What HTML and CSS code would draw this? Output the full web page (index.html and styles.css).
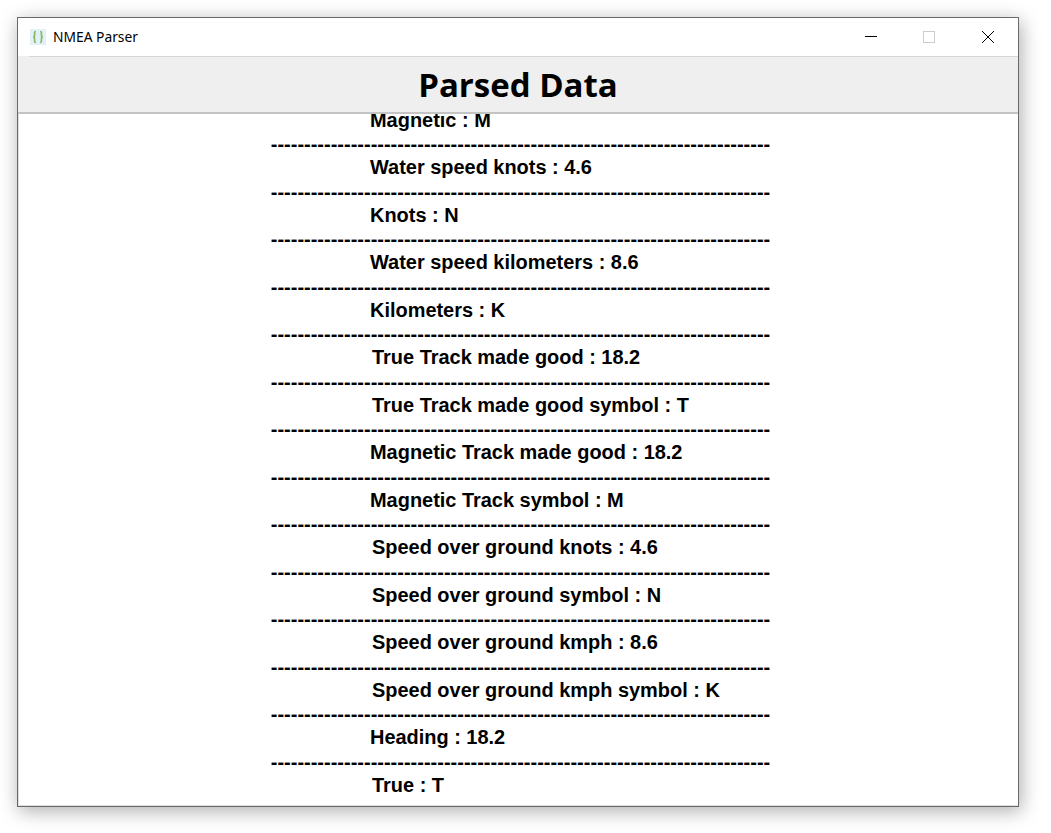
FILE: index.html
```html
<!DOCTYPE html>
<html lang="en">
<head>
<meta charset="utf-8">
<title>NMEA Parser</title>
<link rel="stylesheet" href="styles.css">
</head>
<body>
<div class="window">
  <div class="titlebar">
    <svg class="app-icon" width="16" height="16" viewBox="0 0 16 16">
      <rect width="16" height="16" fill="#e3f1f7"/>
      <path d="M6 2.5C4.2 2.5 4.6 4 4.6 6C4.6 7.2 4.2 8 3 8C4.2 8 4.6 8.800 4.6 10C4.6 12 4.200 13.500 6 13.500M10 2.500C11.800 2.500 11.400 4 11.400 6C11.400 7.200 11.800 8 13 8C11.800 8 11.400 8.800 11.400 10C11.400 12 11.800 13.500 10 13.500" fill="none" stroke="#86bd6a" stroke-width="1.700"/>
    </svg>
    <span class="app-name">NMEA Parser</span>
    <div class="controls">
      <svg class="ctl" width="58" height="38" viewBox="0 0 58 38"><path d="M23 18.500H35" stroke="#000" fill="none"/></svg>
      <svg class="ctl" width="58" height="38" viewBox="0 0 58 38"><rect x="23.500" y="13.500" width="11" height="11" stroke="#ccc" fill="none"/></svg>
      <svg class="ctl" width="58" height="38" viewBox="0 0 58 38"><path d="M24 13L36 25M36 13L24 25" stroke="#000" fill="none"/></svg>
    </div>
  </div>
  <div class="heading-wrap"><h1 class="heading">Parsed Data</h1></div>
  <div class="content">
    <ul class="rows">
      <li class="row">Magnetic : M</li>
      <li class="sep">---------------------------------------------------------------------------</li>
      <li class="row">Water speed knots : 4.6</li>
      <li class="sep">---------------------------------------------------------------------------</li>
      <li class="row">Knots : N</li>
      <li class="sep">---------------------------------------------------------------------------</li>
      <li class="row">Water speed kilometers : 8.6</li>
      <li class="sep">---------------------------------------------------------------------------</li>
      <li class="row">Kilometers : K</li>
      <li class="sep">---------------------------------------------------------------------------</li>
      <li class="row alt">True Track made good : 18.2</li>
      <li class="sep">---------------------------------------------------------------------------</li>
      <li class="row alt">True Track made good symbol : T</li>
      <li class="sep">---------------------------------------------------------------------------</li>
      <li class="row">Magnetic Track made good : 18.2</li>
      <li class="sep">---------------------------------------------------------------------------</li>
      <li class="row">Magnetic Track symbol : M</li>
      <li class="sep">---------------------------------------------------------------------------</li>
      <li class="row alt">Speed over ground knots : 4.6</li>
      <li class="sep">---------------------------------------------------------------------------</li>
      <li class="row alt">Speed over ground symbol : N</li>
      <li class="sep">---------------------------------------------------------------------------</li>
      <li class="row alt">Speed over ground kmph : 8.6</li>
      <li class="sep">---------------------------------------------------------------------------</li>
      <li class="row alt">Speed over ground kmph symbol : K</li>
      <li class="sep">---------------------------------------------------------------------------</li>
      <li class="row">Heading : 18.2</li>
      <li class="sep">---------------------------------------------------------------------------</li>
      <li class="row alt">True : T</li>
    </ul>
  </div>
</div>
</body>
</html>
```
FILE: styles.css
```css
* { box-sizing: border-box; }
html, body { margin: 0; padding: 0; background: #fff; }
body { width: 1051px; height: 833px; overflow: hidden; padding: 17px 0 0 17px; }
.window {
  width: 1002px;
  height: 790px;
  background: #fff;
  border: 1px solid #6a6a6a;
  box-shadow: 2px 4px 18px rgba(0,0,0,.33);
  display: flex;
  flex-direction: column;
  overflow: hidden;
}
.titlebar {
  height: 38px;
  flex: none;
  display: flex;
  align-items: center;
  padding-left: 12px;
}
.app-icon { flex: none; margin-right: 7px; }
.app-name { font: 13.800px/20px "Noto Sans", "Open Sans", sans-serif; color: #000; margin-top: -1px; }
.controls { margin-left: auto; margin-right: 2px; display: flex; margin-top: -1px; }
.ctl { display: block; }
.heading-wrap {
  height: 58px;
  flex: none;
  position: relative;
  background: #efefef;
  border-bottom: 2px solid #c4c4c4;
}
.heading-wrap::before {
  content: "";
  position: absolute;
  top: 0;
  left: 11px;
  right: 0;
  height: 1px;
  background: #d6d6d6;
}
.heading {
  margin: 0;
  text-align: center;
  font: 700 33px/58px "Open Sans", sans-serif;
  color: #000;
}
.content { flex: 1; overflow: hidden; border-left: 1px solid #ddd; border-bottom: 1px solid #ddd; }
.rows { list-style: none; margin: -5.250px 0 0; padding: 0; font: 700 20px/23.750px "Liberation Sans", Arial, sans-serif; color: #000; }
.row { height: 25.500px; padding-left: 351px; font-size: 19.950px; }
.row.alt { padding-left: 353px; }
.sep { height: 22px; line-height: 21px; padding-left: 4px; text-align: center; white-space: nowrap; }
```
